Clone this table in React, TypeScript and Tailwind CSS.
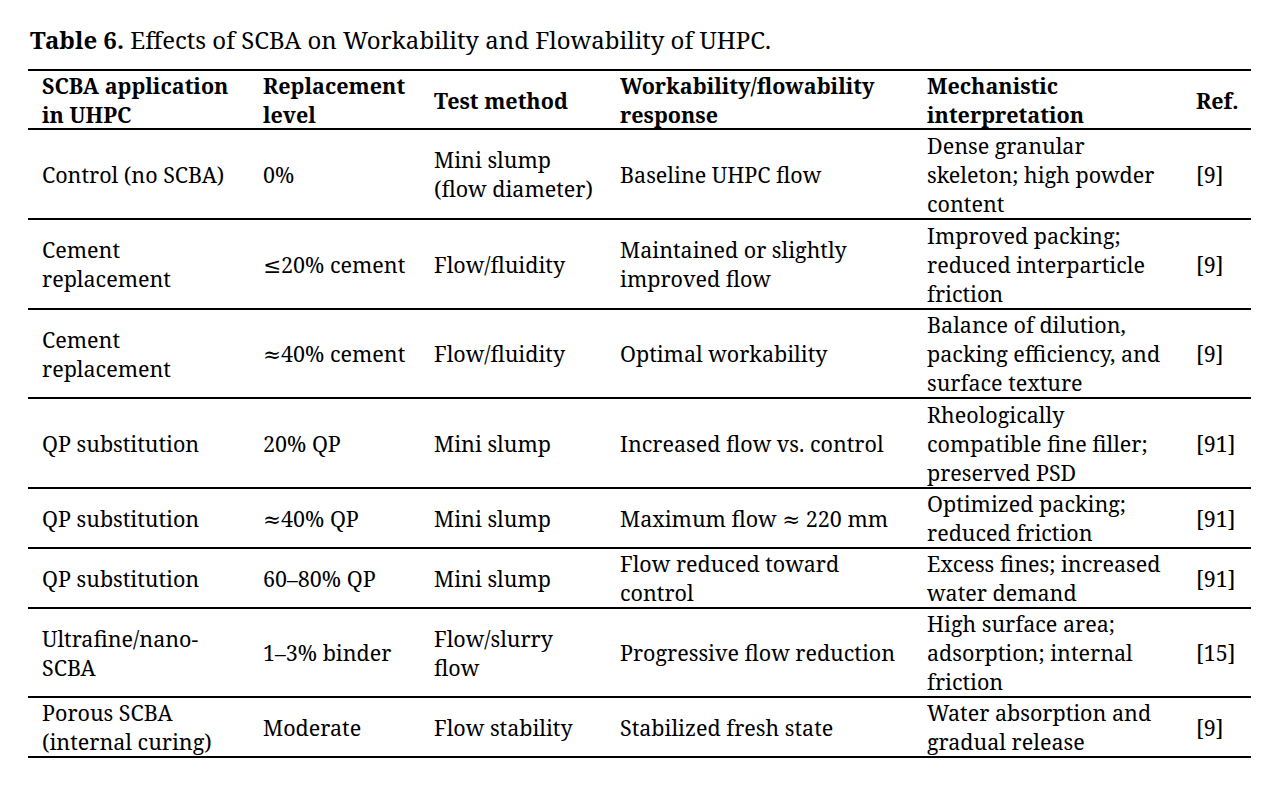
const rows: { h: string; cells: string[][] }[] = [
  {
    h: 'h-[90px]',
    cells: [
      ['Control (no SCBA)'],
      ['0%'],
      ['Mini slump', '(flow diameter)'],
      ['Baseline UHPC flow'],
      ['Dense granular', 'skeleton; high powder', 'content'],
      ['[9]'],
    ],
  },
  {
    h: 'h-[90px]',
    cells: [
      ['Cement', 'replacement'],
      ['≤20% cement'],
      ['Flow/fluidity'],
      ['Maintained or slightly', 'improved flow'],
      ['Improved packing;', 'reduced interparticle', 'friction'],
      ['[9]'],
    ],
  },
  {
    h: 'h-[89px]',
    cells: [
      ['Cement', 'replacement'],
      ['≈40% cement'],
      ['Flow/fluidity'],
      ['Optimal workability'],
      ['Balance of dilution,', 'packing efficiency, and', 'surface texture'],
      ['[9]'],
    ],
  },
  {
    h: 'h-[90px]',
    cells: [
      ['QP substitution'],
      ['20% QP'],
      ['Mini slump'],
      ['Increased flow vs. control'],
      ['Rheologically', 'compatible fine filler;', 'preserved PSD'],
      ['[91]'],
    ],
  },
  {
    h: 'h-[60px]',
    cells: [
      ['QP substitution'],
      ['≈40% QP'],
      ['Mini slump'],
      ['Maximum flow ≈ 220 mm'],
      ['Optimized packing;', 'reduced friction'],
      ['[91]'],
    ],
  },
  {
    h: 'h-[60px]',
    cells: [
      ['QP substitution'],
      ['60–80% QP'],
      ['Mini slump'],
      ['Flow reduced toward', 'control'],
      ['Excess fines; increased', 'water demand'],
      ['[91]'],
    ],
  },
  {
    h: 'h-[89px]',
    cells: [
      ['Ultrafine/nano-', 'SCBA'],
      ['1–3% binder'],
      ['Flow/slurry', 'flow'],
      ['Progressive flow reduction'],
      ['High surface area;', 'adsorption; internal', 'friction'],
      ['[15]'],
    ],
  },
  {
    h: 'h-[60px]',
    cells: [
      ['Porous SCBA', '(internal curing)'],
      ['Moderate'],
      ['Flow stability'],
      ['Stabilized fresh state'],
      ['Water absorption and', 'gradual release'],
      ['[9]'],
    ],
  },
]

const header: string[][] = [
  ['SCBA application', 'in UHPC'],
  ['Replacement', 'level'],
  ['Test method'],
  ['Workability/flowability', 'response'],
  ['Mechanistic', 'interpretation'],
  ['Ref.'],
]

const grid = 'grid grid-cols-[221px_171px_186px_307px_269px_69px]'

function Cell({ lines }: { lines: string[] }) {
  return (
    <div className="flex flex-col justify-center whitespace-nowrap pl-[14px] leading-[29px]">
      {lines.map((l, i) => (
        <span key={i}>{l}</span>
      ))}
    </div>
  )
}

export default function App() {
  return (
    <div
      className="h-[795px] w-[1283px] bg-white pl-[28px] pt-[25px] text-[21.5px] text-black"
      style={{ fontFamily: '"Noto Serif", "DejaVu Serif", serif' }}
    >
      {/* Judul tabel */}
      <p className="pl-[2px] text-[24px] leading-[30px]">
        <b>Table 6.</b> Effects of SCBA on Workability and Flowability of UHPC.
      </p>

      <div className="mt-[14px] w-[1223px] border-t-2 border-black">
        {/* Baris kepala */}
        <div className={`${grid} h-[59px] border-b-2 border-black font-bold`}>
          {header.map((c, i) => (
            <Cell key={i} lines={c} />
          ))}
        </div>

        {rows.map((r, ri) => (
          <div key={ri} className={`${grid} ${r.h} border-b-2 border-black`}>
            {r.cells.map((c, ci) => (
              <Cell key={ci} lines={c} />
            ))}
          </div>
        ))}
      </div>
    </div>
  )
}
